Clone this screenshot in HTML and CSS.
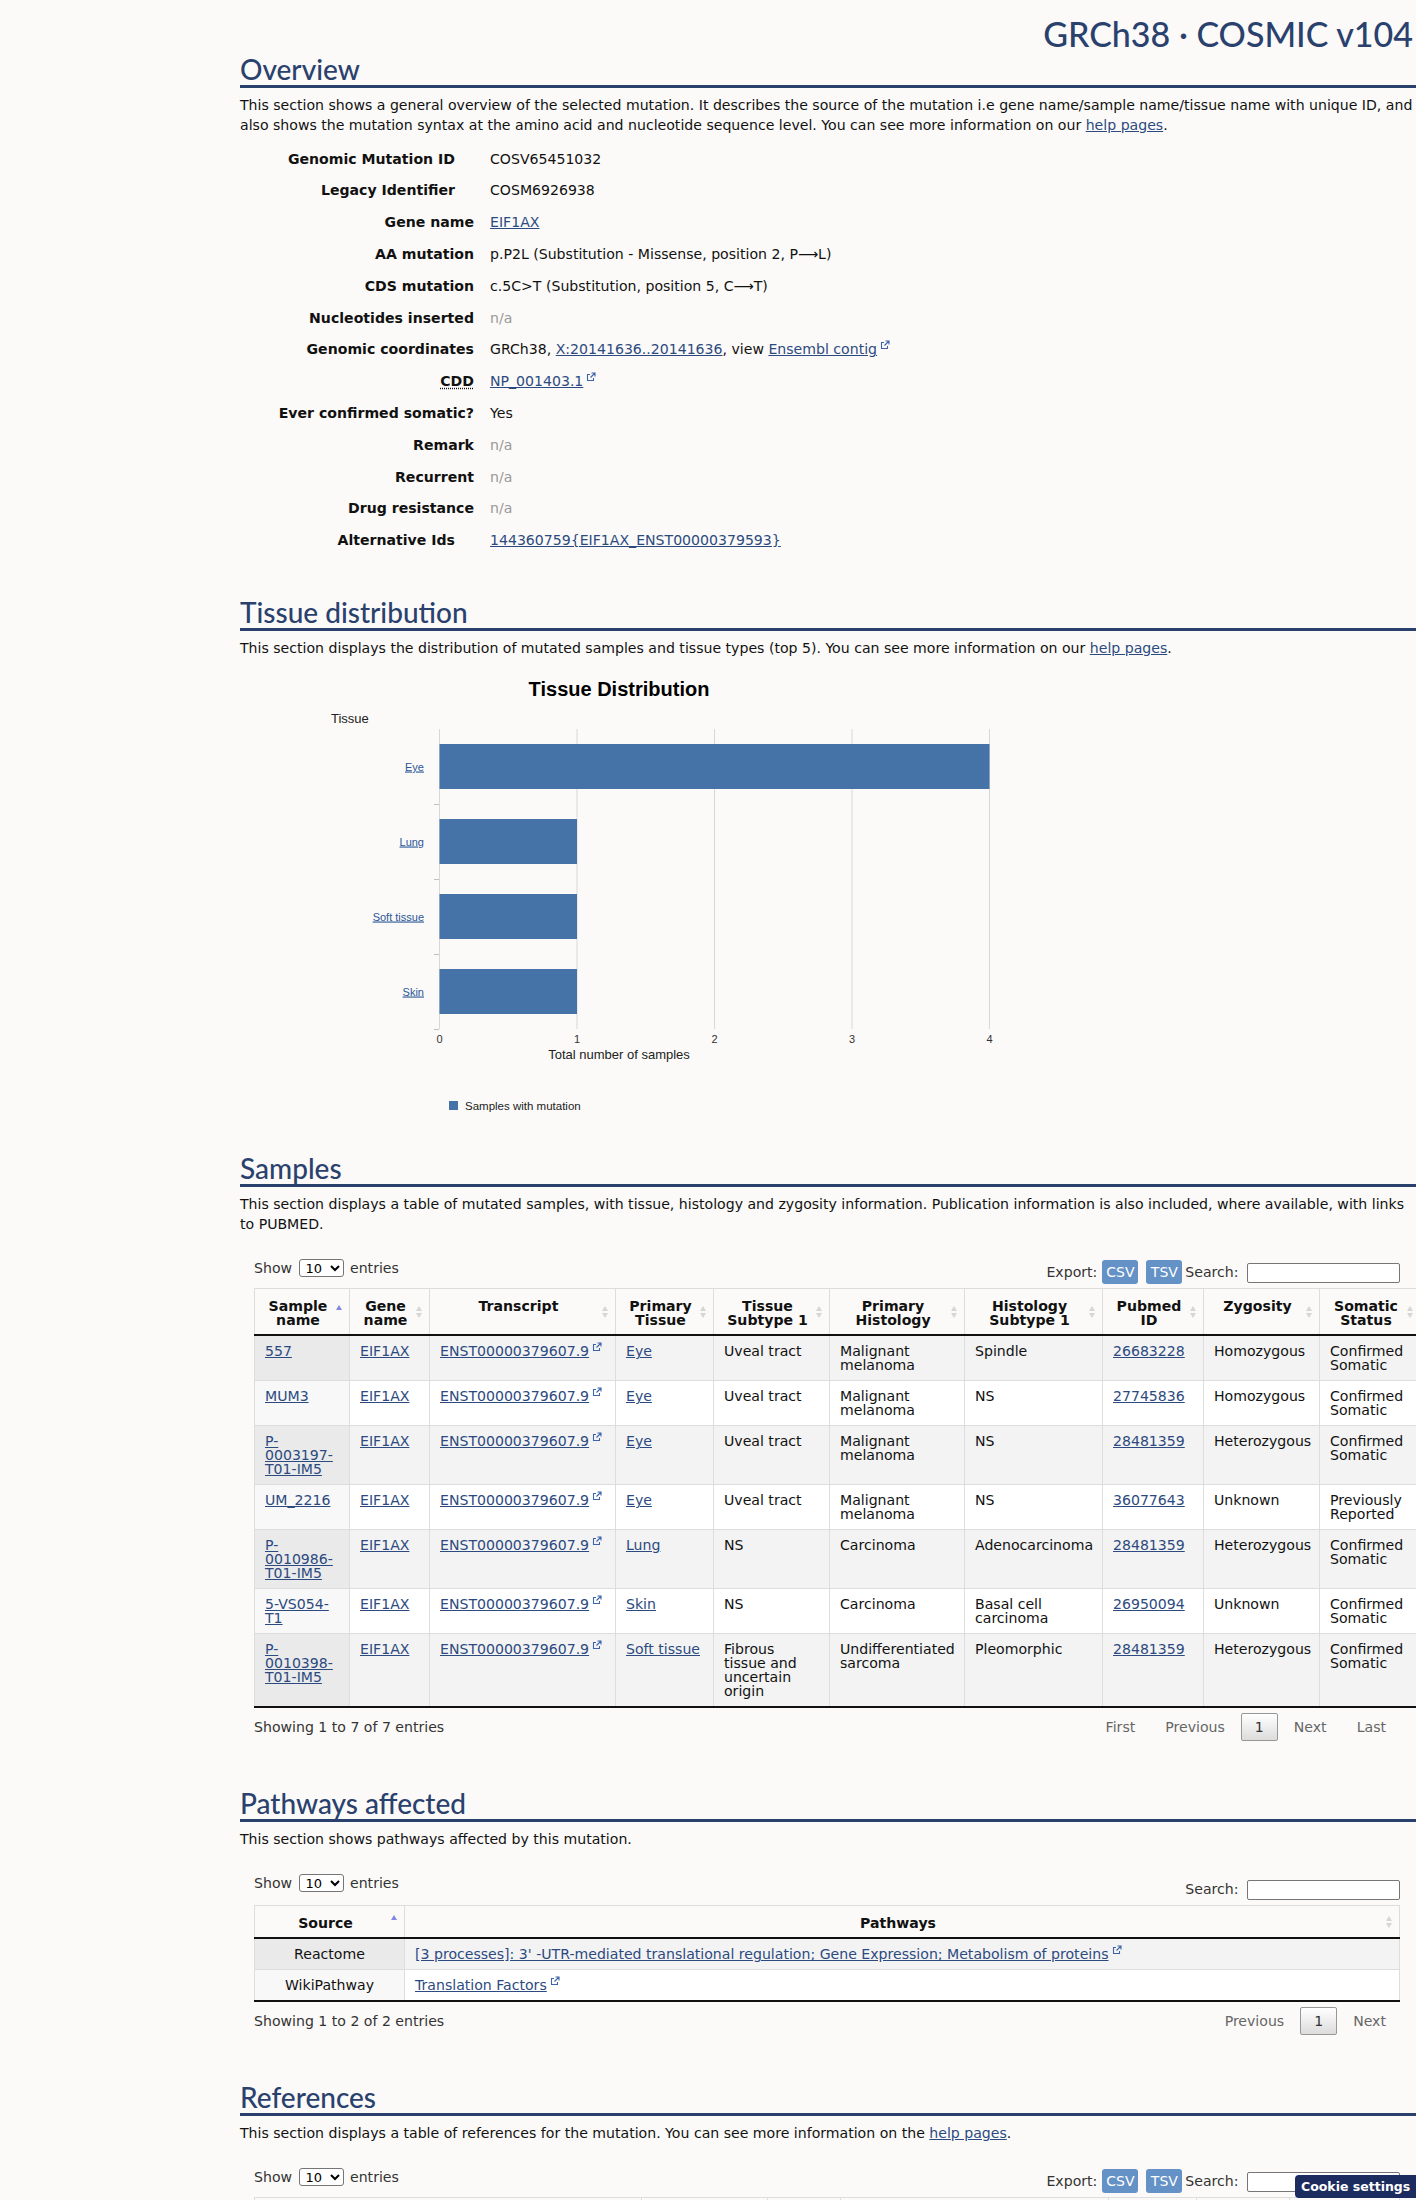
FILE: index.html
```html
<!DOCTYPE html>
<html>
<head>
    <title>COSMIC - COSV65451032 (EIF1AX p.P2L)</title>
    <link rel="stylesheet" href="styles.css">
</head>
<body>
<div class="page">
    <div class="release">GRCh38 &middot; COSMIC v104</div>

    <section class="section" id="overview">
        <h2>Overview</h2>
        <p>This section shows a general overview of the selected mutation. It describes the source of the mutation i.e gene name/sample name/tissue name with unique ID, and also shows the mutation syntax at the amino acid and nucleotide sequence level. You can see more information on our <a href="#">help pages</a>.</p>
        <dl class="summary">
            <dt class="has-help">Genomic Mutation ID</dt><dd>COSV65451032</dd>
            <dt class="has-help">Legacy Identifier</dt><dd>COSM6926938</dd>
            <dt>Gene name</dt><dd><a href="#">EIF1AX</a></dd>
            <dt>AA mutation</dt><dd>p.P2L (Substitution - Missense, position 2, P&#10230;L)</dd>
            <dt>CDS mutation</dt><dd>c.5C&gt;T (Substitution, position 5, C&#10230;T)</dd>
            <dt>Nucleotides inserted</dt><dd class="na">n/a</dd>
            <dt>Genomic coordinates</dt><dd>GRCh38, <a href="#">X:20141636..20141636</a>, view <a href="#">Ensembl contig</a><svg class="ext" viewBox="0 0 10 10"><path d="M4 2.5H1.5v6h6V6"/><path d="M5.5 1h3.5v3.5M9 1L4.5 5.5"/></svg></dd>
            <dt><abbr class="cdd" title="Conserved Domain Database">CDD</abbr></dt><dd><a href="#">NP_001403.1</a><svg class="ext" viewBox="0 0 10 10"><path d="M4 2.5H1.5v6h6V6"/><path d="M5.5 1h3.5v3.5M9 1L4.5 5.5"/></svg></dd>
            <dt>Ever confirmed somatic?</dt><dd>Yes</dd>
            <dt>Remark</dt><dd class="na">n/a</dd>
            <dt>Recurrent</dt><dd class="na">n/a</dd>
            <dt>Drug resistance</dt><dd class="na">n/a</dd>
            <dt class="has-help">Alternative Ids</dt><dd><a href="#">144360759{EIF1AX_ENST00000379593}</a></dd>
        </dl>
    </section>

    <section class="section" id="tissue">
        <h2>Tissue distribution</h2>
        <p>This section displays the distribution of mutated samples and tissue types (top 5). You can see more information on our <a href="#">help pages</a>.</p>
        <svg class="chart" width="800" height="440" viewBox="0 0 800 440">
            <text class="c-title" x="379" y="30" text-anchor="middle">Tissue Distribution</text>
            <text class="c-axis-title" x="91" y="57">Tissue</text>
            <g class="c-grid">
                <line x1="199.5" y1="63" x2="199.5" y2="363"/>
                <line x1="337" y1="63" x2="337" y2="363"/>
                <line x1="474.5" y1="63" x2="474.5" y2="363"/>
                <line x1="612" y1="63" x2="612" y2="363"/>
                <line x1="749.5" y1="63" x2="749.5" y2="363"/>
            </g>
            <g class="c-ticks">
                <line x1="194" y1="138.5" x2="199" y2="138.5"/>
                <line x1="194" y1="213.5" x2="199" y2="213.5"/>
                <line x1="194" y1="288.5" x2="199" y2="288.5"/>
                <line x1="194" y1="363.5" x2="199" y2="363.5"/>
            </g>
            <g class="c-bars">
                <rect x="199.5" y="78" width="550" height="45"/>
                <rect x="199.5" y="153" width="137.5" height="45"/>
                <rect x="199.5" y="228" width="137.5" height="45"/>
                <rect x="199.5" y="303" width="137.5" height="45"/>
            </g>
            <g class="c-cats" text-anchor="end">
                <a href="#"><text x="184" y="104.5">Eye</text></a>
                <a href="#"><text x="184" y="179.5">Lung</text></a>
                <a href="#"><text x="184" y="254.5">Soft tissue</text></a>
                <a href="#"><text x="184" y="329.5">Skin</text></a>
            </g>
            <g class="c-labels" text-anchor="middle">
                <text x="199.5" y="377">0</text>
                <text x="337" y="377">1</text>
                <text x="474.5" y="377">2</text>
                <text x="612" y="377">3</text>
                <text x="749.5" y="377">4</text>
            </g>
            <text class="c-xtitle" x="379" y="393" text-anchor="middle">Total number of samples</text>
            <rect x="209" y="435" width="9" height="9" fill="#4572a7"/>
            <text class="c-legend" x="225" y="444">Samples with mutation</text>
        </svg>
    </section>

    <section class="section" id="samples">
        <h2>Samples</h2>
        <p>This section displays a table of mutated samples, with tissue, histology and zygosity information. Publication information is also included, where available, with links to&nbsp;PUBMED.</p>
        <div class="dt-wrapper">
            <div class="dt-top">
                <label class="dt-length">Show <select><option>10</option><option>25</option><option>50</option></select> entries</label>
                <div class="dt-tools">Export: <button class="export">CSV</button><button class="export">TSV</button><label>Search: <input type="text"></label></div>
            </div>
            <table class="dt samples">
                <colgroup>
                    <col style="width:95px"><col style="width:80px"><col style="width:186px"><col style="width:98px"><col style="width:116px">
                    <col style="width:135px"><col style="width:138px"><col style="width:101px"><col style="width:116px"><col style="width:101px">
                </colgroup>
                <thead>
                    <tr>
                        <th class="asc">Sample name<span class="sort"></span></th>
                        <th>Gene name<span class="sort"></span></th>
                        <th>Transcript<span class="sort"></span></th>
                        <th>Primary Tissue<span class="sort"></span></th>
                        <th>Tissue Subtype 1<span class="sort"></span></th>
                        <th>Primary Histology<span class="sort"></span></th>
                        <th>Histology Subtype 1<span class="sort"></span></th>
                        <th>Pubmed ID<span class="sort"></span></th>
                        <th>Zygosity<span class="sort"></span></th>
                        <th>Somatic Status<span class="sort"></span></th>
                    </tr>
                </thead>
                <tbody>
                    <tr>
                        <td><a href="#">557</a></td><td><a href="#">EIF1AX</a></td>
                        <td class="nowrap"><a href="#">ENST00000379607.9</a><svg class="ext" viewBox="0 0 10 10"><path d="M4 2.5H1.5v6h6V6"/><path d="M5.5 1h3.5v3.5M9 1L4.5 5.5"/></svg></td>
                        <td><a href="#">Eye</a></td><td>Uveal tract</td><td>Malignant melanoma</td><td>Spindle</td>
                        <td><a href="#">26683228</a></td><td>Homozygous</td><td>Confirmed Somatic</td>
                    </tr>
                    <tr>
                        <td><a href="#">MUM3</a></td><td><a href="#">EIF1AX</a></td>
                        <td class="nowrap"><a href="#">ENST00000379607.9</a><svg class="ext" viewBox="0 0 10 10"><path d="M4 2.5H1.5v6h6V6"/><path d="M5.5 1h3.5v3.5M9 1L4.5 5.5"/></svg></td>
                        <td><a href="#">Eye</a></td><td>Uveal tract</td><td>Malignant melanoma</td><td>NS</td>
                        <td><a href="#">27745836</a></td><td>Homozygous</td><td>Confirmed Somatic</td>
                    </tr>
                    <tr>
                        <td><a href="#">P-0003197-T01-IM5</a></td><td><a href="#">EIF1AX</a></td>
                        <td class="nowrap"><a href="#">ENST00000379607.9</a><svg class="ext" viewBox="0 0 10 10"><path d="M4 2.5H1.5v6h6V6"/><path d="M5.5 1h3.5v3.5M9 1L4.5 5.5"/></svg></td>
                        <td><a href="#">Eye</a></td><td>Uveal tract</td><td>Malignant melanoma</td><td>NS</td>
                        <td><a href="#">28481359</a></td><td>Heterozygous</td><td>Confirmed Somatic</td>
                    </tr>
                    <tr>
                        <td><a href="#">UM_2216</a></td><td><a href="#">EIF1AX</a></td>
                        <td class="nowrap"><a href="#">ENST00000379607.9</a><svg class="ext" viewBox="0 0 10 10"><path d="M4 2.5H1.5v6h6V6"/><path d="M5.5 1h3.5v3.5M9 1L4.5 5.5"/></svg></td>
                        <td><a href="#">Eye</a></td><td>Uveal tract</td><td>Malignant melanoma</td><td>NS</td>
                        <td><a href="#">36077643</a></td><td>Unknown</td><td>Previously Reported</td>
                    </tr>
                    <tr>
                        <td><a href="#">P-0010986-T01-IM5</a></td><td><a href="#">EIF1AX</a></td>
                        <td class="nowrap"><a href="#">ENST00000379607.9</a><svg class="ext" viewBox="0 0 10 10"><path d="M4 2.5H1.5v6h6V6"/><path d="M5.5 1h3.5v3.5M9 1L4.5 5.5"/></svg></td>
                        <td><a href="#">Lung</a></td><td>NS</td><td>Carcinoma</td><td>Adenocarcinoma</td>
                        <td><a href="#">28481359</a></td><td>Heterozygous</td><td>Confirmed Somatic</td>
                    </tr>
                    <tr>
                        <td><a href="#">5-VS054-T1</a></td><td><a href="#">EIF1AX</a></td>
                        <td class="nowrap"><a href="#">ENST00000379607.9</a><svg class="ext" viewBox="0 0 10 10"><path d="M4 2.5H1.5v6h6V6"/><path d="M5.5 1h3.5v3.5M9 1L4.5 5.5"/></svg></td>
                        <td><a href="#">Skin</a></td><td>NS</td><td>Carcinoma</td><td>Basal cell carcinoma</td>
                        <td><a href="#">26950094</a></td><td>Unknown</td><td>Confirmed Somatic</td>
                    </tr>
                    <tr>
                        <td><a href="#">P-0010398-T01-IM5</a></td><td><a href="#">EIF1AX</a></td>
                        <td class="nowrap"><a href="#">ENST00000379607.9</a><svg class="ext" viewBox="0 0 10 10"><path d="M4 2.5H1.5v6h6V6"/><path d="M5.5 1h3.5v3.5M9 1L4.5 5.5"/></svg></td>
                        <td><a href="#">Soft tissue</a></td><td>Fibrous tissue and uncertain origin</td><td>Undifferentiated sarcoma</td><td>Pleomorphic</td>
                        <td><a href="#">28481359</a></td><td>Heterozygous</td><td>Confirmed Somatic</td>
                    </tr>
                </tbody>
            </table>
            <div class="dt-bottom">
                <div class="dt-info">Showing 1 to 7 of 7 entries</div>
                <div class="dt-paginate">
                    <span class="pg">First</span><span class="pg">Previous</span><span class="pg current">1</span><span class="pg">Next</span><span class="pg">Last</span>
                </div>
            </div>
        </div>
    </section>

    <section class="section" id="pathways">
        <h2>Pathways affected</h2>
        <p>This section shows pathways affected by this mutation.</p>
        <div class="dt-wrapper">
            <div class="dt-top search-only">
                <label class="dt-length">Show <select><option>10</option><option>25</option><option>50</option></select> entries</label>
                <div class="dt-tools"><label>Search: <input type="text"></label></div>
            </div>
            <table class="dt pathways">
                <colgroup><col style="width:150px"><col></colgroup>
                <thead>
                    <tr>
                        <th class="asc">Source<span class="sort"></span></th>
                        <th>Pathways<span class="sort"></span></th>
                    </tr>
                </thead>
                <tbody>
                    <tr>
                        <td class="centered">Reactome</td>
                        <td><a href="#">[3 processes]: 3' -UTR-mediated translational regulation; Gene Expression; Metabolism of proteins</a><svg class="ext" viewBox="0 0 10 10"><path d="M4 2.5H1.5v6h6V6"/><path d="M5.5 1h3.5v3.5M9 1L4.5 5.5"/></svg></td>
                    </tr>
                    <tr>
                        <td class="centered">WikiPathway</td>
                        <td><a href="#">Translation Factors</a><svg class="ext" viewBox="0 0 10 10"><path d="M4 2.5H1.5v6h6V6"/><path d="M5.5 1h3.5v3.5M9 1L4.5 5.5"/></svg></td>
                    </tr>
                </tbody>
            </table>
            <div class="dt-bottom">
                <div class="dt-info">Showing 1 to 2 of 2 entries</div>
                <div class="dt-paginate">
                    <span class="pg">Previous</span><span class="pg current">1</span><span class="pg">Next</span>
                </div>
            </div>
        </div>
    </section>

    <section class="section" id="references">
        <h2>References</h2>
        <p>This section displays a table of references for the mutation. You can see more information on the <a href="#">help pages</a>.</p>
        <div class="dt-wrapper">
            <div class="dt-top">
                <label class="dt-length">Show <select><option>10</option><option>25</option><option>50</option></select> entries</label>
                <div class="dt-tools">Export: <button class="export">CSV</button><button class="export">TSV</button><label>Search: <input type="text"></label></div>
            </div>
            <table class="dt refs">
                <colgroup>
                    <col style="width:387px"><col style="width:126px"><col style="width:73px"><col style="width:268px"><col style="width:88px"><col style="width:93px"><col>
                </colgroup>
                <thead>
                    <tr>
                        <th class="asc">Title<span class="sort"></span></th>
                        <th>Author<span class="sort"></span></th>
                        <th>Year<span class="sort"></span></th>
                        <th>Journal<span class="sort"></span></th>
                        <th>PMID<span class="sort"></span></th>
                        <th>Samples<span class="sort"></span></th>
                        <th>Study<span class="sort"></span></th>
                    </tr>
                </thead>
            </table>
        </div>
    </section>
</div>

<div class="cookie">Cookie settings</div>
</body>
</html>
```

FILE: styles.css
```css
body {
    margin: 0;
    background-color: #fbfaf8;
    font-family: "DejaVu Sans", Verdana, sans-serif;
    font-size: 14.1px;
    line-height: 20px;
    color: #111;
    overflow-x: hidden;
}

a {
    color: #2c4a80;
}

.page {
    width: 1185px;
    margin-left: 240px;
    padding-top: 14px;
}

.release {
    font-family: Lato, "Open Sans", sans-serif;
    font-weight: 500;
    font-size: 34px;
    line-height: 40px;
    color: #2a416e;
    text-align: right;
    padding-right: 12px;
}

.section h2 {
    margin: 0;
    font-family: Lato, "Open Sans", sans-serif;
    font-weight: 500;
    font-size: 28px;
    line-height: 32px;
    color: #2a416e;
    border-bottom: 3px solid #2a416e;
}

#overview h2 {
    margin-top: -1px;
}

.section + .section {
    margin-top: 46px;
}

.section p {
    margin: 7px 0 0;
}

/* overview */
.summary {
    display: grid;
    grid-template-columns: 234px 1fr;
    column-gap: 16px;
    row-gap: 11.8px;
    margin: 13.6px 0 0;
}

.summary dt {
    font-weight: bold;
    text-align: right;
}

.summary dt.has-help {
    padding-right: 19px;
}

.summary dd {
    margin: 0;
}

.summary .na {
    color: #999;
}

.cdd {
    text-decoration: underline dotted;
    text-underline-offset: 2px;
}

.ext {
    position: relative;
    top: -4px;
    width: 10px;
    height: 10px;
    margin-left: 3px;
    fill: none;
    stroke: #3d63a8;
    stroke-width: 1.1;
}

/* chart */
.chart {
    display: block;
    margin-top: 8px;
    overflow: visible;
    font-family: "Liberation Sans", Arial, sans-serif;
}

.c-title {
    font-size: 20px;
    font-weight: bold;
    fill: #000;
}

.c-axis-title {
    font-size: 13px;
    fill: #222;
}

.c-grid line {
    stroke: #d8d8d8;
    stroke-width: 1;
}

.c-ticks line {
    stroke: #c0c0c0;
    stroke-width: 1;
}

.c-bars rect {
    fill: #4572a7;
}

.c-cats text {
    font-size: 11px;
    fill: #2b5797;
    text-decoration: underline;
}

.c-labels text {
    font-size: 11px;
    fill: #333;
}

.c-xtitle {
    font-size: 13px;
    fill: #222;
}

.c-legend {
    font-size: 11.5px;
    fill: #222;
}

/* data tables */
.dt-wrapper {
    margin: 24px 25px 0 14px;
}

.dt-top {
    display: flex;
    justify-content: space-between;
    align-items: flex-start;
    height: 30px;
    color: #333;
}

.dt-top.search-only {
    height: 32px;
}

.dt-length select {
    width: 45px;
    height: 18px;
    font-family: "DejaVu Sans", Verdana, sans-serif;
    font-size: 13px;
    border: 1px solid #767676;
    border-radius: 3px;
    background: #fff;
    padding: 0 2px;
    margin: 0 2px;
}

.dt-tools {
    display: flex;
    align-items: center;
    margin-top: 2px;
}

.search-only .dt-tools {
    margin-top: 6px;
}

.export {
    height: 24px;
    width: 36px;
    margin-left: 5px;
    padding: 0;
    border: 0;
    border-radius: 3px;
    background-color: #6491c6;
    color: #fff;
    font-family: "DejaVu Sans", Verdana, sans-serif;
    font-size: 14px;
}

.export + .export {
    margin-left: 8px;
}

.dt-tools label {
    margin-left: 3px;
}

.dt-tools input {
    width: 153px;
    height: 20px;
    box-sizing: border-box;
    margin-left: 4px;
    border: 1px solid #767676;
    border-radius: 2px;
    background: #fff;
    vertical-align: middle;
}

.dt {
    border-collapse: collapse;
    table-layout: fixed;
    line-height: 14px;
    border-bottom: 2px solid #111;
}

.dt.samples {
    width: 1166px;
}

.dt.pathways,
.dt.refs {
    width: 100%;
}

.dt th {
    position: relative;
    padding: 10px 18px 7px 10px;
    text-align: center;
    vertical-align: top;
    font-weight: bold;
    border: 1px solid #ddd;
    border-bottom: 2px solid #111;
}

.dt td {
    padding: 8px 10px;
    vertical-align: top;
    border: 1px solid #ddd;
    background-color: #fff;
}

.dt td.nowrap {
    white-space: nowrap;
}

.dt tbody tr:nth-child(odd) td {
    background-color: #f3f3f3;
}

.dt tbody td:first-child {
    background-color: #f8f8f8;
}

.dt tbody tr:nth-child(odd) td:first-child {
    background-color: #eaeaea;
}

.dt td.centered {
    text-align: center;
}

.sort {
    position: absolute;
    right: 6px;
    top: 50%;
    width: 7px;
    height: 16px;
    margin-top: -8px;
}

.sort::before,
.sort::after {
    content: "";
    position: absolute;
    left: 0;
    border-left: 3.5px solid transparent;
    border-right: 3.5px solid transparent;
}

.sort::before {
    top: 2px;
    border-bottom: 5px solid #d6d6d6;
}

.sort::after {
    bottom: 2px;
    border-top: 5px solid #d6d6d6;
}

th.asc .sort::before {
    top: 1px;
    border-bottom-color: #8286e4;
}

th.asc .sort::after {
    display: none;
}

.dt-bottom {
    display: flex;
    justify-content: space-between;
    align-items: center;
    padding-top: 5px;
    color: #333;
}

.dt-paginate {
    display: flex;
}

.pg {
    margin-left: 2px;
    padding: 3px 13px;
    line-height: 20px;
    border: 1px solid transparent;
    border-radius: 2px;
    color: #666;
}

.pg.current {
    color: #333;
    border-color: #979797;
    background: linear-gradient(#fff, #dcdcdc);
}

.cookie {
    position: fixed;
    right: 0;
    bottom: 2px;
    width: 121px;
    height: 23px;
    box-sizing: border-box;
    padding-left: 6px;
    border-radius: 4px 0 0 4px;
    background-color: #1d2c5e;
    color: #fff;
    font-weight: bold;
    font-size: 12.5px;
    line-height: 23px;
    white-space: nowrap;
    overflow: hidden;
}
```
